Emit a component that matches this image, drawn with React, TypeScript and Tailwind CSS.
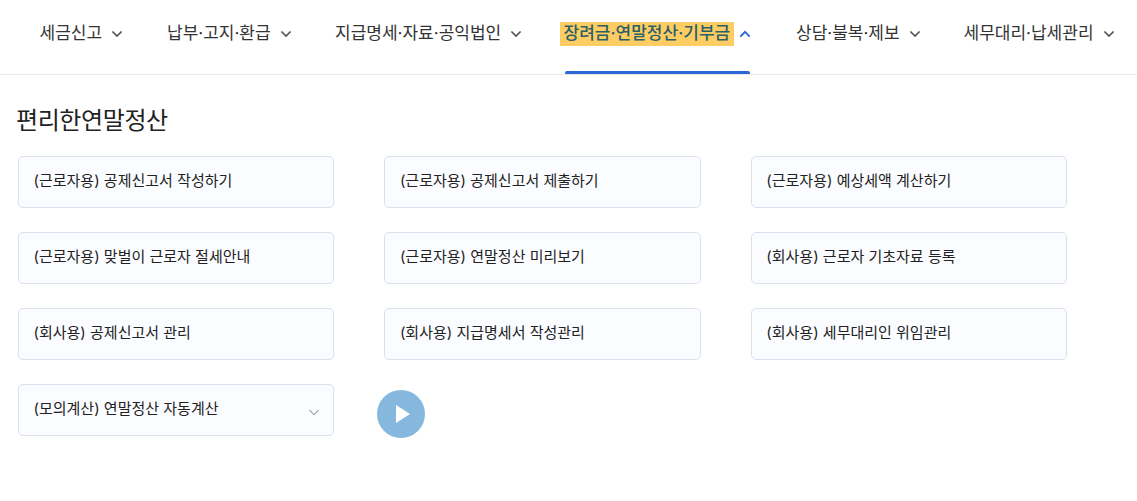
import React from "react";

const F = 'Inter, "Noto Sans CJK KR", "Noto Sans", sans-serif';

function Chevron({ up = false, color = "#555" }: { up?: boolean; color?: string }) {
  return (
    <svg width="12" height="8" viewBox="0 0 12 8" fill="none" className="shrink-0">
      <path d={up ? "M1.3 6.6 6 1.9l4.7 4.7" : "M1.4 1.5 6 6.1l4.6-4.6"} stroke={color} strokeWidth={up ? 2 : 1.7} />
    </svg>
  );
}

const cards = [
  "(근로자용) 공제신고서 작성하기",
  "(근로자용) 공제신고서 제출하기",
  "(근로자용) 예상세액 계산하기",
  "(근로자용) 맞벌이 근로자 절세안내",
  "(근로자용) 연말정산 미리보기",
  "(회사용) 근로자 기초자료 등록",
  "(회사용) 공제신고서 관리",
  "(회사용) 지급명세서 작성관리",
  "(회사용) 세무대리인 위임관리",
];

function Card({ text, children }: { text: string; children?: React.ReactNode }) {
  return (
    <div className="h-[52px] w-[316.4px] rounded-[5px] border border-[#d9e1ee] bg-[#fbfcff] pl-[14.5px] pr-[13px] pb-[2px] flex items-center justify-between text-[15px] text-[#222]">
      <span>{text}</span>
      {children}
    </div>
  );
}

function NavItem({ label, className }: { label: string; className: string }) {
  return (
    <div className={`flex items-center gap-[9px] ${className}`}>
      <span className="text-[17px] text-[#333]">{label}</span>
      <Chevron />
    </div>
  );
}

export default function App() {
  return (
    <div className="w-[1137px] h-[501px] bg-white overflow-hidden" style={{ fontFamily: F }}>
      <nav className="h-[75px] border-b border-[#e8e9ec] flex pl-[39.5px] pb-[6px] items-center">
        <NavItem label="세금신고" className="w-[127.5px]" />
        <NavItem label="납부·고지·환급" className="w-[168px]" />
        <NavItem label="지급명세·자료·공익법인" className="w-[224.5px]" />
        <div className="relative self-stretch flex items-center gap-[5px] w-[236.5px] -mb-[6px] pb-[6px]">
          <span className="bg-[#fdcd64] px-[4px] h-[24px] flex items-center text-[17px] text-[#2c5f66] font-medium">
            장려금·연말정산·기부금
          </span>
          <Chevron up color="#2a68d8" />
          <div className="absolute left-[5.5px] top-[71px] w-[185px] h-[3px] rounded-t-[2px] bg-[#2a68d8]" />
        </div>
        <NavItem label="상담·불복·제보" className="w-[167.5px]" />
        <NavItem label="세무대리·납세관리" className="w-[160px]" />
      </nav>

      <main className="pl-[18px]">
        <h2 className="-ml-[2px] mt-[29px] h-[33px] text-[24px] leading-[33px] tracking-[-0.4px] text-[#222]">
          편리한연말정산
        </h2>
        <div className="mt-[19px] grid grid-cols-[316.4px_316.4px_316.4px] gap-x-[50px] gap-y-[24px]">
          {cards.map((c) => (
            <Card key={c} text={c} />
          ))}
          <div className="col-span-3 flex items-start">
            <Card text="(모의계산) 연말정산 자동계산">
              <svg width="10" height="7" viewBox="0 0 10 7" fill="none" className="mt-[6px] mr-[1px]">
                <path d="M0.5 1 5 5.8 9.5 1" stroke="#777" strokeWidth="1" />
              </svg>
            </Card>
            <button className="ml-[42.6px] mt-[6px] w-[48px] h-[48px] rounded-full bg-[#86b8de] flex items-center justify-center">
              <svg width="14" height="18" viewBox="0 0 14 18" className="ml-[4px]">
                <path d="M0 0v18l14-9z" fill="#fff" />
              </svg>
            </button>
          </div>
        </div>
      </main>
    </div>
  );
}
